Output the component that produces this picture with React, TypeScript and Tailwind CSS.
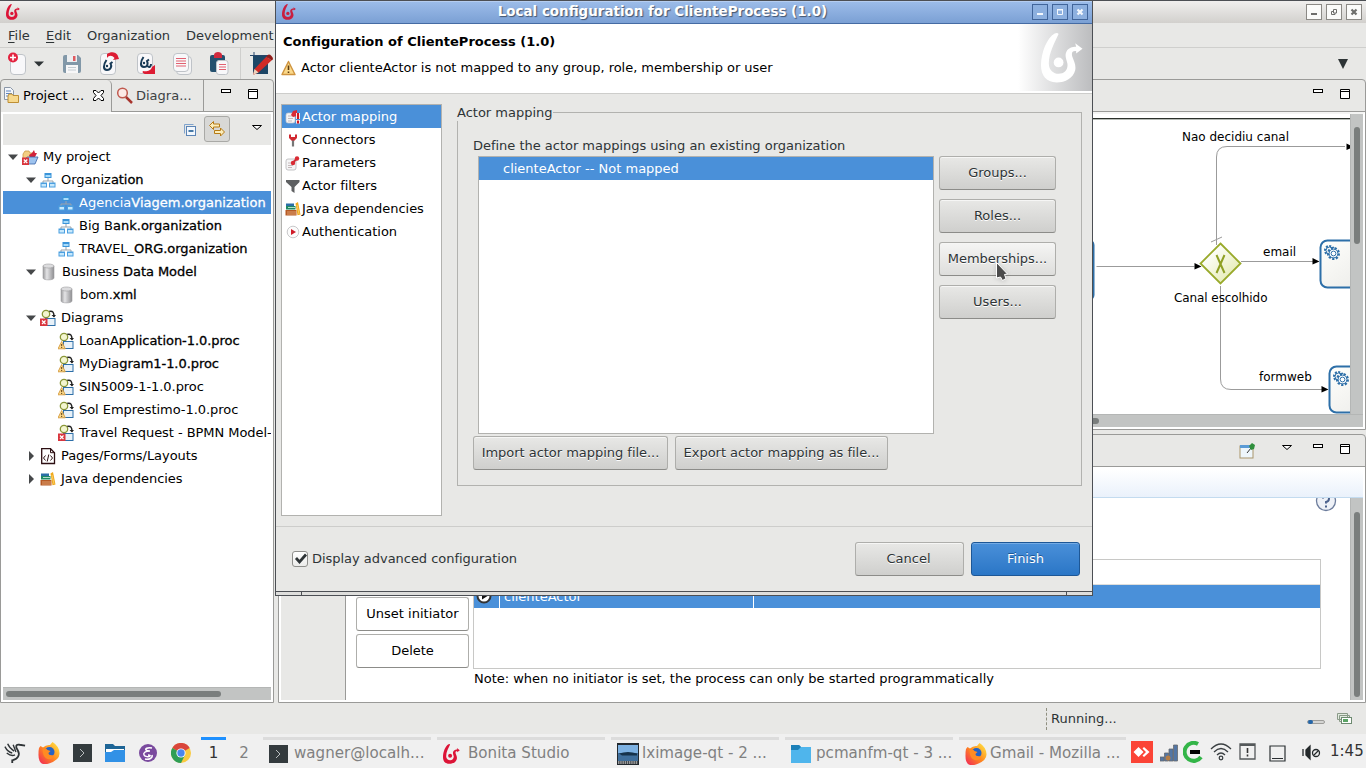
import React from "react";

type P = { className?: string };

function Bonita({ className = "", color = "#dc1437" }: P & { color?: string }) {
  return (
    <svg viewBox="0 0 43 51" className={className} preserveAspectRatio="none">
      <path
        fill={color}
        d="M14 0.5Q17 -.5 18 1C14 10 8 20 8 31C8 38 13 41.500 18 41.500C24 41.500 28 37 27 31C26 27 24 23 26 19C28 15 32 14 36 14L35 10.500L42.500 16L36 21L36 18.500C32 18 31 20 32 24C34 29 36 33 35 38C33 46 25 50.500 16 50.500C5 50.500 0 43 0 33C0 20 6 5 14 .5Z"
      />
      <circle cx="18" cy="30" r="5" fill={color} />
    </svg>
  );
}

function OrgIcon() {
  return (
    <svg viewBox="0 0 16 16" className="h-4 w-4 shrink-0">
      <path d="M8 6v3M3 11V9h10v2" fill="none" stroke="#9aa3ab" />
      <rect x="4.500" y="1" width="7" height="5" fill="#3b94d9" />
      <rect x="5.500" y="3" width="5" height="2" fill="#a8dcfa" />
      <rect x="0.500" y="10.500" width="6.500" height="5" fill="#4b9fe0" />
      <rect x="1.500" y="12" width="4.500" height="2.500" fill="#c6e8fc" />
      <rect x="9" y="10.500" width="6.500" height="5" fill="#4b9fe0" />
      <rect x="10" y="12" width="4.500" height="2.500" fill="#c6e8fc" />
    </svg>
  );
}

function DbIcon() {
  return (
    <svg viewBox="0 0 16 18" className="h-[18px] w-4 shrink-0">
      <defs>
        <linearGradient id="db">
          <stop offset="0" stopColor="#9a9a9c" />
          <stop offset="0.350" stopColor="#e4e4e6" />
          <stop offset="1" stopColor="#8f8f92" />
        </linearGradient>
      </defs>
      <path d="M3 3v12c0 2.500 11 2.500 11 0V3z" fill="url(#db)" stroke="#a0a0a2" strokeWidth="0.600" />
      <ellipse cx="8.500" cy="3" rx="5.500" ry="2" fill="#dcdcde" stroke="#9c9c9e" strokeWidth="0.600" />
    </svg>
  );
}

function ProcIcon({ error }: { error?: boolean }) {
  return (
    <svg viewBox="0 0 16 18" className="h-[18px] w-4 shrink-0">
      <path d="M9 2.500c4-1 5 1 5 5" fill="none" stroke="#222" strokeWidth="1.500" />
      <path d="M11.500 6h4.500l-2 2.500z" fill="#222" />
      <circle cx="6" cy="5" r="3.700" fill="#f3f5cf" stroke="#8a9738" strokeWidth="1.300" />
      <rect x="5.500" y="9.500" width="9.500" height="7" fill="#e8f1f8" stroke="#2d6fa8" />
      {error ? (
        <g>
          <rect x="0" y="9.500" width="7.500" height="7.500" fill="#d9363e" />
          <path d="M2 11.500l3.500 3.500M5.500 11.500L2 15" stroke="#fff" strokeWidth="1.200" />
        </g>
      ) : (
        <g>
          <path d="M3.700 9.500L7.300 16.800H0z" fill="#fbd98a" stroke="#d59a3c" strokeWidth="0.900" strokeLinejoin="round" />
          <path d="M3.700 12v2.200M3.700 15v1" stroke="#5b3a10" />
        </g>
      )}
    </svg>
  );
}

function ProjectIcon() {
  return (
    <svg viewBox="0 0 17 18" className="h-[18px] w-[17px] shrink-0">
      <path d="M1 6l2-3h4l1 2h4v6H1z" fill="#f3cf83" stroke="#c99a46" strokeWidth="0.800" />
      <path d="M7 7l3-2 2-3 1 3h2l-2 4-5 1z" fill="#d1223a" />
      <path d="M2 14l3-5h11l-3 7H6z" fill="#9ec3ee" stroke="#3b64a8" strokeWidth="0.800" />
      <rect x="0" y="9.500" width="7" height="7.500" fill="#d9363e" />
      <path d="M1.800 11.500l3.500 3.500M5.300 11.500L1.800 15" stroke="#fff" strokeWidth="1.200" />
    </svg>
  );
}

function PagesIcon() {
  return (
    <svg viewBox="0 0 16 18" className="h-[18px] w-4 shrink-0">
      <path d="M1.700 1.700h8.800l4 4v10.800H1.700z" fill="#fff" stroke="#2c0e12" strokeWidth="1.300" />
      <path d="M10.500 1.700v4h4" fill="none" stroke="#2c0e12" />
      <path d="M5.500 8.500L3.500 11l2 2.500M10.500 8.500l2 2.500-2 2.500M8.800 7.500l-1.600 7" fill="none" stroke="#2c0e12" />
    </svg>
  );
}

function BooksIcon() {
  return (
    <svg viewBox="0 0 16 16" className="h-4 w-4 shrink-0">
      <rect x="1" y="2.500" width="8" height="2.500" fill="#2a6ea6" />
      <rect x="1" y="5" width="9.500" height="3.500" fill="#1f8a63" />
      <path d="M3 6.500h7" stroke="#d7f0e4" strokeWidth="0.800" />
      <rect x="0.500" y="9" width="11" height="5.500" fill="#b65a25" />
      <path d="M2 11h9.500M2 13h9.500" stroke="#e9b184" strokeWidth="0.800" />
      <path d="M10.500 2.500L13 1l2.500 12.500-3 .8z" fill="#f0a91c" />
      <path d="M12 4l2 9" stroke="#fbd674" strokeWidth="0.800" />
    </svg>
  );
}

function Arrow({ kind }: { kind: "down" | "right" | "none" }) {
  return (
    <svg viewBox="0 0 12 12" className="h-3 w-3 shrink-0">
      {kind === "down" && <path d="M1 3.500h10L6 9z" fill="#46484a" />}
      {kind === "right" && <path d="M4 1v10L9 6z" fill="#46484a" />}
    </svg>
  );
}

function Heavy({ children }: { children: React.ReactNode }) {
  return <span className="[-webkit-text-stroke:0.3px_currentColor]">{children}</span>;
}

const MinIcon = () => (
  <svg viewBox="0 0 12 12" className="h-3 w-3 shrink-0"><rect x="1.500" y="0.500" width="9" height="3" fill="#fff" stroke="#000" /></svg>
);
const MaxIcon = () => (
  <svg viewBox="0 0 12 12" className="h-3 w-3 shrink-0"><path d="M1.500 .5h9v9h-9zM1.500 2.500h9" fill="#fff" stroke="#000" /></svg>
);
const MenuTri = () => (
  <svg viewBox="0 0 12 12" className="h-3 w-3 shrink-0"><path d="M1.500 1.500h9L6 5.500z" fill="#fff" stroke="#000" /></svg>
);

function TreeRow(p: {
  level: number;
  arrow?: "down" | "right";
  icon: React.ReactNode;
  selected?: boolean;
  wide?: boolean;
  children: React.ReactNode;
}) {
  const pad = p.level === 0 ? "pl-[4px]" : p.level === 1 ? "pl-[22px]" : "pl-[40px]";
  return (
    <div className={`flex h-[23px] shrink-0 items-center whitespace-nowrap tracking-[-0.05px] ${pad} ${p.selected ? "bg-[#4a90d9] text-white" : "text-black"}`}>
      <Arrow kind={p.arrow ?? "none"} />
      <span className="ml-[3px] flex w-[18px] shrink-0 items-center">{p.icon}</span>
      <span className={p.wide ? "pl-[4px]" : "pl-[3px]"}>{p.children}</span>
    </div>
  );
}

function WinBtn({ kind, blue }: { kind: "min" | "max" | "restore" | "close"; blue?: boolean }) {
  const c = blue ? "#f4f8fd" : "#6e6e6c";
  return (
    <span className={`flex h-4 w-4 items-center justify-center border ${blue ? "border-[#41659a] bg-[#8db0df]" : "border-[#8b8985] bg-[#fbfbfa]"}`}>
      <svg viewBox="0 0 14 14" className="h-[14px] w-[14px]">
        {kind === "min" && <rect x="4" y="8" width="6" height="2" fill={c} />}
        {kind === "max" && <path d="M4.500 5h5v4.500h-5zM4 4.500h6" fill="none" stroke={c} />}
        {kind === "restore" && <path d="M6.500 4.500h3v3.500h-3zM6.500 6.500h-2v3h3.500v-1.500" fill="none" stroke={c} />}
        {kind === "close" && <path d="M4.500 4.500l5 5M9.500 4.500l-5 5" stroke={c} strokeWidth="2.200" />}
      </svg>
    </span>
  );
}

function Btn({ children, className = "", hot, footer }: { children: React.ReactNode; className?: string; hot?: boolean; footer?: boolean }) {
  return (
    <button
      className={`flex h-[34px] items-center justify-center rounded-[3px] border border-[#aeaeab] border-b-[#8c8c89] text-[#2e3436] shadow-[inset_0_1px_0_#f6f6f5] [text-shadow:0_1px_0_#fff] ${footer ? "pr-[2px]" : "pb-[2px]"} ${hot ? "bg-linear-to-b from-[#f5f5f4] to-[#dededc]" : "bg-linear-to-b from-[#e8e8e6] to-[#cfcfcd]"} ${className}`}
    >
      {children}
    </button>
  );
}

function Toolbar() {
  return (
    <div className="flex h-[31px] shrink-0 items-center bg-[#e8e8e6] pl-[5px] text-[#2e3436]">
      <svg viewBox="0 0 24 26" className="h-[26px] w-6 shrink-0">
        <rect x="5.500" y="3.500" width="15" height="20" rx="3.500" fill="#f8f8fa" stroke="#bfc3c8" />
        <circle cx="8" cy="6.500" r="5" fill="#e3223f" />
        <path d="M8 3.500v6M5 6.500h6" stroke="#fff" strokeWidth="1.600" />
      </svg>
      <svg viewBox="0 0 12 12" className="ml-[4px] h-3 w-3"><path d="M1 3.500h10L6 8.500z" fill="#2e3436" /></svg>
      <svg viewBox="0 0 20 20" className="ml-[17px] h-5 w-5 shrink-0">
        <path d="M1 3q0-2 2-2h13l3 3v13q0 2-2 2H3q-2 0-2-2z" fill="#8298a8" />
        <rect x="5" y="1" width="10" height="7" fill="#eceef0" />
        <rect x="11" y="2" width="2.500" height="5" fill="#df5a5f" />
        <rect x="4" y="11" width="12" height="8" fill="#f7f7f8" />
        <path d="M6 13.500h8M6 16h8" stroke="#c4ccd2" />
      </svg>
      <span className="ml-[15px]">
        <svg viewBox="0 0 24 26" className="h-[26px] w-6">
          <rect x="3.500" y="2.500" width="15" height="21" rx="3.500" fill="#f8f8fa" stroke="#bfc3c8" />
          <path d="M10 3c4-3 9-2 10.500 1l1.500 4-6 1 1.500-2C15 4 12 4 10 7z" fill="#dd1c33" />
          <path d="M9.500 9C6 14 6 19 10 19s5-4 3.500-6.500l2-1.500" fill="none" stroke="#173a56" strokeWidth="2" />
          <circle cx="10" cy="15" r="1.200" fill="#173a56" />
        </svg>
      </span>
      <span className="ml-[13px]">
        <svg viewBox="0 0 24 26" className="h-[26px] w-6">
          <rect x="3.500" y="2.500" width="15" height="20" rx="3.500" fill="#f8f8fa" stroke="#bfc3c8" />
          <path d="M9.500 6C6 11 6 16 10 16s4-4 3-6l2-1.500M14 15c1 2 3 1 3-2" fill="none" stroke="#173a56" strokeWidth="2" />
          <circle cx="10" cy="12" r="1.200" fill="#173a56" />
          <path d="M21 14v9h-9c-3 0-4-2-3-3 3 1 8 0 9-4z" fill="#dd1c33" />
        </svg>
      </span>
      <span className="ml-[13px]">
        <svg viewBox="0 0 24 26" className="h-[26px] w-6">
          <rect x="5.500" y="5.500" width="15" height="18" rx="3.500" fill="#f4f4f5" stroke="#bfc3c8" />
          <rect x="2.500" y="2.500" width="15" height="18" rx="3.500" fill="#f8f8fa" stroke="#bfc3c8" />
          <path d="M5 7.500h10M5 10h10M5 12.500h10M5 15h10" stroke="#e26070" />
        </svg>
      </span>
      <span className="ml-[13px]">
        <svg viewBox="0 0 24 26" className="h-[26px] w-6">
          <rect x="2" y="4" width="15" height="17" rx="2" fill="#24506e" />
          <path d="M6 4c0-4 8-4 8 0v3H6z" fill="#d02a3d" />
          <rect x="8.500" y="9.500" width="11.500" height="14" rx="2.500" fill="#f8f8fa" stroke="#bfc3c8" />
          <path d="M11 13.500h7M11 16h7M11 18.500h7" stroke="#e26070" />
        </svg>
      </span>
      <span className="ml-[8px] h-[31px] w-px bg-[#cfcfcd]" />
      <svg viewBox="0 0 24 26" className="ml-[8px] h-[26px] w-6 shrink-0">
        <path d="M5 1v4M1 4.500h20" stroke="#26466a" />
        <path d="M4 5h15v18H4z" fill="#1d4666" />
        <path d="M17.500 5.500l5 4L9.500 21.500 4 24l1.500-6z" fill="#cf2a26" />
        <path d="M5.500 18l4 3.500L4 24z" fill="#ecd3bd" />
        <path d="M17.500 5.500q2-3.500 5-.5t0 4.500z" fill="#8f1c1a" />
      </svg>
    </div>
  );
}

function LeftPane() {
  return (
    <div className="flex w-[274px] shrink-0 flex-col rounded-t-[4px] border border-[#9a9a98] bg-[#e8e8e6]">
      <div className="flex h-[32px] shrink-0">
        <div className="flex w-[111px] items-center rounded-tr-[5px] border-r border-[#9a9a98] pb-px pl-[2px] text-black">
          <svg viewBox="0 0 17 17" className="mr-[3px] h-[17px] w-[17px] shrink-0">
            <path d="M1.500 .5h6l3 3v9h-9z" fill="#f3f6fb" stroke="#8b97a8" />
            <path d="M3 4h5M3 6.500h6M3 9h3" stroke="#5e84bf" />
            <path d="M5 9l1-2h3l1 1.500h5.500v7H5z" fill="#f7d98e" stroke="#be8f35" />
          </svg>
          <span className="w-[70px] whitespace-nowrap">Project ...</span>
          <svg viewBox="0 0 11 11" className="h-[11px] w-[11px] shrink-0">
            <path d="M.5 .5h2.500l2.500 2.500L8 .5h2.500v2L8 5.500l2.500 3v2H8L5.500 8 3 10.500H.5v-2L3 5.500.5 2.500z" fill="#fff" stroke="#000" />
          </svg>
        </div>
        <div className="flex grow border-b border-[#9a9a98]">
          <div className="flex w-[92px] items-center border-r border-[#9a9a98] pl-[4px] text-[#3c4244]">
            <svg viewBox="0 0 17 17" className="mr-[3px] h-[17px] w-[17px] shrink-0">
              <circle cx="6.500" cy="6" r="4.800" fill="#fbe9e6" stroke="#c0594e" strokeWidth="1.500" />
              <path d="M10 10l6 6" stroke="#a8352e" strokeWidth="2.500" />
            </svg>
            Diagra...
          </div>
          <div className="flex gap-[15px] pl-[16px] pt-[9px]"><MinIcon /><MaxIcon /></div>
        </div>
      </div>
      <div className="flex min-h-0 grow flex-col border-2 border-white bg-white">
        <div className="flex h-[31px] shrink-0 items-center bg-[#e8e8e6]">
          <svg viewBox="0 0 14 14" className="ml-[180px] h-[14px] w-[14px]">
            <path d="M1.500 10.500v-9h9" fill="none" stroke="#7fa3cd" />
            <rect x="3.500" y="3.500" width="9" height="9" fill="#f2f7fd" stroke="#5b84b5" />
            <path d="M5.500 8h5" stroke="#0c4f8a" strokeWidth="1.500" />
          </svg>
          <span className="mb-[2px] ml-[7px] flex h-[26px] w-[26px] items-center justify-center rounded-[3px] border border-[#a9a9a6] bg-[#d8d8d6]">
            <svg viewBox="0 0 18 18" className="h-[18px] w-[18px]">
              <path d="M1.500 5.500l4-4v2.500h6v3h-6v2.500zM16.500 12l-4-4v2.500h-6v3h6V16z" fill="#fbedbb" stroke="#b67a14" strokeLinejoin="round" />
            </svg>
          </span>
          <span className="ml-[21px]"><MenuTri /></span>
        </div>
        <div className="flex min-h-0 grow flex-col overflow-hidden bg-white">
          <TreeRow level={0} arrow="down" icon={<ProjectIcon />}>My project</TreeRow>
          <TreeRow level={1} arrow="down" icon={<OrgIcon />}>Organiz<Heavy>ation</Heavy></TreeRow>
          <TreeRow level={2} selected icon={<OrgIcon />}><span className="tracking-[0.02px]">Agencia<Heavy>Viagem.organization</Heavy></span></TreeRow>
          <TreeRow level={2} icon={<OrgIcon />}><span className="tracking-[0.02px]">Big B<Heavy>ank.organization</Heavy></span></TreeRow>
          <TreeRow level={2} icon={<OrgIcon />}>TRAVEL_<Heavy>ORG.organization</Heavy></TreeRow>
          <TreeRow level={1} wide arrow="down" icon={<DbIcon />}>Business <Heavy>Data Model</Heavy></TreeRow>
          <TreeRow level={2} wide icon={<DbIcon />}>bom.<Heavy>xml</Heavy></TreeRow>
          <TreeRow level={1} arrow="down" icon={<ProcIcon error />}>Diagrams</TreeRow>
          <TreeRow level={2} icon={<ProcIcon />}>LoanA<Heavy>pplication-1.0.proc</Heavy></TreeRow>
          <TreeRow level={2} icon={<ProcIcon />}>MyDia<Heavy>gram1-1.0.proc</Heavy></TreeRow>
          <TreeRow level={2} icon={<ProcIcon />}>SIN5009-1-1.0.proc</TreeRow>
          <TreeRow level={2} icon={<ProcIcon />}>Sol Emprestimo-1.0.proc</TreeRow>
          <TreeRow level={2} icon={<ProcIcon error />}>Travel Request - BPMN Model-</TreeRow>
          <TreeRow level={1} arrow="right" icon={<PagesIcon />}>Pages/Forms/Layouts</TreeRow>
          <TreeRow level={1} arrow="right" icon={<BooksIcon />}>Java dependencies</TreeRow>
        </div>
        <div className="flex h-[13px] shrink-0 items-center border-t border-[#b4b6b5] bg-[#c2c4c3] pl-[3px]">
          <div className="h-[6px] w-[215px] rounded-full bg-[#7a7e7d]" />
        </div>
      </div>
    </div>
  );
}

function Gear({ x, y }: { x: number; y: number }) {
  return (
    <g fill="none" stroke="#2d6fa8">
      <circle cx={x - 4} cy={y - 3} r="4.500" strokeWidth="2" strokeDasharray="2 1.400" />
      <circle cx={x - 4} cy={y - 3} r="3.500" />
      <circle cx={x} cy={y} r="5.400" strokeWidth="2.200" strokeDasharray="2.200 1.500" fill="#fff" />
      <circle cx={x} cy={y} r="4.400" />
      <circle cx={x} cy={y} r="2.400" />
    </g>
  );
}

function Diagram() {
  return (
    <div className="relative grow overflow-hidden bg-white">
      <svg viewBox="1069 114 281 300" className="absolute right-0 top-0 h-[300px] w-[281px]">
        <defs>
          <linearGradient id="gw" x1="0" y1="0" x2="1" y2="1"><stop offset="0.200" stopColor="#fff" /><stop offset="1" stopColor="#dfe6a0" /></linearGradient>
          <linearGradient id="task" x1="0" y1="0" x2="1" y2="1"><stop offset="0" stopColor="#fffffc" /><stop offset="1" stopColor="#e9e9e6" /></linearGradient>
        </defs>
        <path d="M1069 118.500h281" stroke="#2b302b" />
        <path d="M1069 119.500h281" stroke="#b5bab5" />
        <rect x="1060" y="240" width="33.500" height="60" rx="5" fill="#fff" stroke="#2d6fa8" strokeWidth="2" />
        <g fill="none" stroke="#9b9b9b">
          <path d="M1096.500 266.500h98M1216.500 245v-88q0-10.500 10.500-10.500h118M1241 261.500h72M1220.500 286v93q0 10.500 10.500 10.500h92M1211 242l11-5" />
        </g>
        <g fill="#000"><path d="M1194.500 263v6.500l7-3zM1346.500 143.500v6.500l7-3zM1312.500 258v6.500l7-3zM1321.500 386v6.500l7-3z" /></g>
        <path d="M1220.500 243.500l20 20-20 20-20-20z" fill="url(#gw)" stroke="#99aa2b" strokeWidth="1.800" />
        <path d="M1216.500 255l8 18M1224.500 255l-8 18" stroke="#8fa024" strokeWidth="2" />
        <rect x="1320.500" y="240.500" width="60" height="47" rx="7" fill="url(#task)" stroke="#2d6fa8" strokeWidth="2" />
        <rect x="1329.500" y="366.500" width="60" height="46" rx="7" fill="url(#task)" stroke="#2d6fa8" strokeWidth="2" />
        <Gear x={1333.5} y={253.5} />
        <Gear x={1342.5} y={379.5} />
        <g fill="#000" className="font-['DejaVu_Sans'] text-[12px]">
          <text x="1182" y="141">Nao decidiu canal</text>
          <text x="1263" y="256">email</text>
          <text x="1174" y="302" textLength="93.500">Canal escolhido</text>
          <text x="1259" y="381">formweb</text>
        </g>
      </svg>
    </div>
  );
}

function EditorPane() {
  return (
    <div className="flex h-[351px] shrink-0 flex-col rounded-tr-[4px] border border-[#9a9a98] bg-[#e8e8e6]">
      <div className="flex h-[32px] shrink-0 justify-end gap-[15px] border-b border-[#9a9a98] pr-[14px] pt-[9px]"><MinIcon /><MaxIcon /></div>
      <div className="flex min-h-0 grow flex-col border-2 border-white border-t-[#f4f4f3]">
        <div className="flex min-h-0 grow">
          <Diagram />
          <div className="w-[13px] shrink-0 border-l border-[#b4b6b5] bg-[#c2c4c3] pl-[3px] pt-[13px]"><div className="h-[117px] w-[6px] rounded-full bg-[#7a7e7d]" /></div>
        </div>
        <div className="flex h-[13px] shrink-0 items-center border-t border-[#b4b6b5] bg-[#c2c4c3] pl-[20px]"><div className="h-[6px] w-[798px] rounded-full bg-[#7a7e7d]" /></div>
      </div>
    </div>
  );
}

function PropertiesPane() {
  return (
    <div className="mt-[4px] flex min-h-0 grow flex-col rounded-t-[4px] border border-[#9a9a98] bg-[#e8e8e6]">
      <div className="flex h-[32px] shrink-0 justify-end border-b border-[#9a9a98] pr-[14px] pt-[9px]">
        <svg viewBox="0 0 17 17" className="-mt-[2px] mr-[25px] h-[17px] w-[17px]">
          <rect x="1" y="4" width="13" height="12" fill="#eef6fb" stroke="#a9956b" />
          <rect x="1" y="3" width="13" height="3" fill="#5b9bd6" />
          <path d="M8 11l4-5" stroke="#333" />
          <path d="M10 4l3-3 3 2-1 4-3 1z" fill="#2f8f3c" />
        </svg>
        <span className="mr-[19px]"><MenuTri /></span>
        <span className="mr-[15px]"><MinIcon /></span>
        <MaxIcon />
      </div>
      <div className="flex min-h-0 grow flex-col border-2 border-white bg-white">
        <div className="h-[29px] shrink-0 border-b border-[#c3dbef] bg-linear-to-b from-white to-[#eaf1fb]" />
        <div className="flex min-h-0 grow">
          <div className="w-[65px] shrink-0 border-r border-[#9a9a98] bg-[#e8e8e6]" />
          <div className="flex w-[127px] shrink-0 flex-col gap-[3px] pl-[10px] pr-[4px] pt-[99px] text-black">
            <div className="flex h-[34px] items-center justify-center rounded-[3px] border border-[#aeaeab] border-b-[#8c8c89] pb-[2px]">Unset initiator</div>
            <div className="flex h-[34px] items-center justify-center rounded-[3px] border border-[#aeaeab] border-b-[#8c8c89] pb-[2px]">Delete</div>
          </div>
          <div className="flex w-[848px] shrink-0 flex-col pt-[61px]">
            <div className="h-[110px] shrink-0 border border-[#c8c8c6]">
              <div className="h-[25px] border-b border-[#dededc]" />
              <div className="flex h-[23px] items-center bg-[#4a90d9] text-white">
                <span className="flex w-[26px] justify-center self-stretch border-r border-white pr-[5px]">
                  <svg viewBox="0 0 16 16" className="mt-[3px] h-4 w-4"><circle cx="8" cy="8" r="6.500" fill="#fff" stroke="#333" strokeWidth="2" /><path d="M6 4.500v7L11.500 8z" fill="#111" /></svg>
                </span>
                <span className="flex w-[254px] items-center self-stretch border-r border-white pl-[4px]">clienteActor</span>
              </div>
            </div>
            <div className="pl-px pt-[2px] leading-[16px] tracking-[-0.01px] text-black">Note: when no initiator is set, the process can only be started programmatically</div>
          </div>
          <div className="min-w-0 grow [clip-path:inset(0_0_0_-10px)]">
            <svg viewBox="0 0 22 22" className="-ml-[6px] -mt-[8px] h-[22px] w-[22px]">
              <circle cx="11" cy="11" r="9.500" fill="#eef1f7" stroke="#6c7c9c" strokeWidth="1.300" />
              <path d="M8 8.500q0-3 3-3t3 3-3 3.500v1.500M11 15.500v2" fill="none" stroke="#4b618c" strokeWidth="2" />
            </svg>
          </div>
          <div className="w-[13px] shrink-0 border-l border-[#b4b6b5] bg-[#c2c4c3] pl-[3px] pt-[14px]"><div className="h-[185px] w-[6px] rounded-full bg-[#7a7e7d]" /></div>
        </div>
      </div>
    </div>
  );
}

function NavItem({ icon, selected, children }: { icon: React.ReactNode; selected?: boolean; children: React.ReactNode }) {
  return (
    <div className={`flex h-[23px] items-center gap-[1px] pl-[3px] ${selected ? "bg-[#4a90d9] text-white" : "text-black"}`}>
      <svg viewBox="0 0 16 16" className="h-4 w-4 shrink-0">{icon}</svg>
      <span className="tracking-[-0.03px]">{children}</span>
    </div>
  );
}

function Dialog() {
  return (
    <div className="absolute left-[275px] top-0 flex h-[596px] w-[818px] flex-col border border-[#4c4f54] bg-[#e8e8e6] text-[#2e3436]">
      <div className="flex h-[23px] shrink-0 items-center border-b border-[#456ba3] bg-linear-to-b from-[#9dbdea] to-[#7ba0d4] pl-[6px] pr-[4px] shadow-[inset_0_1px_0_#b5cdf0]">
        <Bonita className="h-4 w-[14px]" color="#c91e3f" />
        <span className="grow pb-[2px] pr-[3px] text-center text-[13.450px] font-bold text-white [text-shadow:1px_1px_1px_#42546e]">Local configuration for ClienteProcess (1.0)</span>
        <span className="flex gap-1"><WinBtn kind="min" blue /><WinBtn kind="max" blue /><WinBtn kind="close" blue /></span>
      </div>
      <div className="flex h-[70px] shrink-0 justify-between border-b border-[#cdcdcb] bg-white pb-[2px] text-black">
        <div className="flex flex-col pl-[7px] pt-[9px]">
          <div className="font-bold leading-[17px] tracking-[0.01px]">Configuration of ClienteProcess (1.0)</div>
          <div className="mt-[9px] flex items-center leading-[18px] tracking-[-0.03px]">
            <svg viewBox="0 0 15 16" className="-ml-[2px] mr-[5px] h-4 w-[15px]">
              <path d="M7.500 1.500L14 14.500H1z" fill="#fbd98a" stroke="#cf9440" strokeWidth="1.400" strokeLinejoin="round" />
              <path d="M7.500 5.500v4.500M7.500 11.500v1.500" stroke="#5b3a10" strokeWidth="1.600" />
            </svg>
            Actor clienteActor is not mapped to any group, role, membership or user
          </div>
        </div>
        <div className="flex w-[74px] justify-end bg-linear-to-r from-white to-[#bcbdbf] pr-[9px] pt-[9px]"><Bonita className="h-[50px] w-[42px]" color="#fff" /></div>
      </div>
      <div className="flex h-[433px] shrink-0 border-b border-[#cdcdcb]">
        <div className="ml-[5px] mt-[10px] h-[412px] w-[161px] shrink-0 border border-[#b2b2af] bg-white">
          <NavItem selected icon={<g><rect x="1" y="4" width="9" height="10" rx="2" fill="#f5f5f6" stroke="#c5c5c8" strokeWidth="0.700" /><path d="M3 7h5M3 9.500h5M3 12h4" stroke="#c5b9bb" /><path d="M6 6l2-4 4-1v6l-4 1z" fill="#d92b34" /><path d="M13 4v6M13 11v3.500" stroke="#fff" strokeWidth="4" /><path d="M13 4v6M13 11.500v3" stroke="#cf1820" strokeWidth="2.200" /></g>}>Actor mapping</NavItem>
          <NavItem icon={<g><path d="M4 2.500v3.500l3 3h2l3-3V2.500H10V5H6V2.500z" fill="#d12830" /><path d="M8 8.500v6" stroke="#777" strokeWidth="2.200" /></g>}>Connectors</NavItem>
          <NavItem icon={<g><rect x="1" y="4" width="10" height="11" rx="2" fill="#f5f5f6" stroke="#b5b5b8" strokeWidth="0.800" /><path d="M3 8h5M3 10.500h5M3 12.500h4" stroke="#c5b9bb" /><path d="M8 7.500l4-4" stroke="#c8303a" strokeWidth="2" /><circle cx="8" cy="8" r="2.200" fill="#d92b34" /><circle cx="12" cy="3.500" r="2.200" fill="#d92b34" /></g>}>Parameters</NavItem>
          <NavItem icon={<path d="M1 2h13.500v2L9.500 9v6l-3-2V9L1 4z" fill="#5e6062" />}>Actor filters</NavItem>
          <NavItem icon={<BooksIcon />}>Java dependencies</NavItem>
          <NavItem icon={<g><circle cx="8" cy="8" r="5.800" fill="#fbfbfb" stroke="#c9c9cb" /><path d="M6 5v6l5-3z" fill="#d01c28" /></g>}>Authentication</NavItem>
        </div>
        <fieldset className="ml-[15px] mt-[10px] h-[382px] w-[625px] shrink-0 border border-[#b2b2af]">
          <legend className="-ml-px h-[17px] leading-[17px]">Actor mapping</legend>
          <div className="flex">
            <div className="w-[477px] pl-[15px] pt-[16px]">
              <div className="h-[19px] leading-[17px] tracking-[-0.02px]">Define the actor mappings using an existing organization</div>
              <div className="ml-[5px] h-[278px] w-[456px] border border-[#b2b2af] bg-white">
                <div className="flex h-[23px] items-center bg-[#4a90d9] pl-[24px] text-white">clienteActor -- Not mapped</div>
              </div>
              <div className="mt-[2px] flex gap-[7px]"><Btn className="w-[195px] shrink-0 tracking-[-0.03px]">Import actor mapping file...</Btn><Btn className="w-[213px] shrink-0 tracking-[-0.03px]">Export actor mapping as file...</Btn></div>
            </div>
            <div className="flex w-[121px] flex-col gap-[9px] pl-[4px] pt-[35px]">
              <Btn>Groups...</Btn><Btn>Roles...</Btn><Btn hot>Memberships...</Btn><Btn>Users...</Btn>
            </div>
          </div>
        </fieldset>
      </div>
      <div className="flex min-h-0 grow items-center pb-px pl-[16px] pr-[12px]">
        <span className="mr-[4px] flex h-4 w-4 items-center justify-center rounded-[3px] border border-[#8f8f8c] bg-linear-to-b from-white to-[#ececea]">
          <svg viewBox="0 0 14 14" className="h-[14px] w-[14px] overflow-visible"><path d="M3 6l3.500 4L13 2.500" fill="none" stroke="#2e3436" strokeWidth="2.700" /></svg>
        </span>
        <span className="grow tracking-[-0.03px]">Display advanced configuration</span>
        <Btn footer className="w-[109px]">Cancel</Btn>
        <button className="ml-[7px] flex h-[34px] w-[109px] items-center justify-center rounded-[3px] border border-[#1d5796] bg-linear-to-b from-[#4a90d9] to-[#2a76c6] pb-px text-white shadow-[inset_0_1px_0_#74abe4] [text-shadow:0_-1px_0_#1d5796]">Finish</button>
      </div>
      <div className="flex h-[4px] shrink-0 border-t border-[#4c4f54] bg-[#dededc]">
        <span className="w-[26px] border-r border-[#4c4f54]" />
        <span className="w-[765px] border-r border-[#4c4f54]" />
      </div>
    </div>
  );
}

function Firefox() {
  return (
    <svg viewBox="0 0 22 22" className="h-[22px] w-[22px] shrink-0">
      <defs><linearGradient id="ff" x1="1" y1="0" x2="0" y2="1"><stop offset="0" stopColor="#fff04a" /><stop offset="0.500" stopColor="#ff8a1e" /><stop offset="1" stopColor="#f0215c" /></linearGradient></defs>
      <path d="M1 6l1.500-2L5 5.500Q8 2.500 12 3L14.500 0Q21 4 21.500 11T11 21.500 .5 12Q.5 8 1 6z" fill="url(#ff)" />
      <circle cx="11.500" cy="10" r="5" fill="#2463c4" />
      <path d="M4.500 7q4-1.500 5 1l3 1-2 2q0 3 6 2-2 5-7 4-5-2-5-10z" fill="#ff8b22" />
    </svg>
  );
}
function Term() {
  return <svg viewBox="0 0 19 18" className="h-[18px] w-[19px] shrink-0"><rect width="19" height="18" fill="#343b3e" /><path d="M7 5l4 4-4 4" fill="none" stroke="#b9bebf" /></svg>;
}
function Folder({ light }: { light?: boolean }) {
  return light ? (
    <svg viewBox="0 0 20 18" className="h-[18px] w-5 shrink-0"><path d="M0 0h8l2 2h10v16H0z" fill="#4fb5ec" /><path d="M0 0h8l2 2-3 3H0z" fill="#1c80b8" /></svg>
  ) : (
    <svg viewBox="0 0 20 18" className="h-[18px] w-5 shrink-0"><path d="M0 0h8l2 2h10v6H0z" fill="#1e6596" /><path d="M1 5h18v4H1z" fill="#fff" /><path d="M0 8h6l3-2h11v12H0z" fill="#3191e6" /></svg>
  );
}

function Task({ icon, children, last }: { icon: React.ReactNode; children: string; last?: boolean }) {
  return (
    <div className={`mr-[6px] flex shrink-0 flex-col ${last ? "w-[167px]" : "w-[168px]"}`}>
      <div className="h-[3px] bg-[#dcdcdc]" />
      <div className="flex grow items-center whitespace-nowrap pb-px pl-[6px] text-[15.100px] text-[#808080]">
        <span className="flex w-[25px] shrink-0 items-center">{icon}</span>{children}
      </div>
    </div>
  );
}

function Taskbar() {
  return (
    <div className="flex h-[34px] shrink-0 bg-[#f0f0f0] pt-[3px]">
      <div className="flex w-[201px] shrink-0 items-center pl-[4px]">
        <svg viewBox="0 0 24 24" className="h-[22px] w-[22px]" fill="none" stroke="#2f3437" strokeWidth="2">
          <path d="M23 4l-6-1c-4-1-5 2-2 6 3 5 0 10-6 11v3" /><path d="M1 5q3 6 8 7M4 2q2 5 7 8M3 12q5 4 9 2M10 3l3 8" strokeWidth="1.500" />
        </svg>
        <span className="ml-[12px] flex w-[35px]"><Firefox /></span>
        <span className="flex w-[32px]"><Term /></span>
        <span className="flex w-[34px]"><Folder /></span>
        <svg viewBox="0 0 18 18" className="h-[18px] w-[18px]"><circle cx="9" cy="9" r="9" fill="#7a4a9e" /><path d="M13 4c-5-1-7 1-6 2s3 1 4 1c-5 0-7 2-6 4s5 2 6 1-2-1-2-1M6 15c4 1 8-1 7-4" fill="none" stroke="#fff" strokeWidth="1.500" /></svg>
        <svg viewBox="0 0 20 20" className="ml-[14px] h-5 w-5">
          <circle cx="10" cy="10" r="10" fill="#f9ca3f" /><path d="M10 10L1.300 5A10 10 0 0 1 18.700 5z" fill="#d9453b" /><path d="M10 10L1.300 5A10 10 0 0 0 10 20l4-8z" fill="#2f9e55" /><circle cx="10" cy="10" r="4.600" fill="#fff" /><circle cx="10" cy="10" r="3.700" fill="#4a86ec" />
        </svg>
      </div>
      <div className="flex w-[25px] shrink-0 flex-col items-center border-t-[3px] border-[#1e90ff] pt-[1px] text-[15px] leading-[24px] text-[#333]">1</div>
      <div className="mr-[6px] flex w-[31px] shrink-0 flex-col items-center pl-[5px] pt-[4px] text-[15px] leading-[24px] text-[#808080]">2</div>
      <Task icon={<Term />}>wagner@localh...</Task>
      <Task icon={<Bonita className="h-5 w-[17px]" />}>Bonita Studio</Task>
      <Task icon={<svg viewBox="0 0 22 22" className="h-[22px] w-[22px]"><rect width="22" height="22" fill="#22282e" /><rect x="1" y="2" width="20" height="8" fill="#7db1e2" /><rect x="1" y="10" width="20" height="8" fill="#3f6e9b" /><path d="M2 10.500q9-3 18 0v2H5z" fill="#16324a" /><path d="M1 19.500h20" stroke="#9a9a9a" strokeWidth="3" strokeDasharray="1.500 .7" /></svg>}>lximage-qt - 2 ...</Task>
      <Task icon={<Folder light />}>pcmanfm-qt - 3 ...</Task>
      <Task last icon={<Firefox />}>Gmail - Mozilla ...</Task>
      <div className="-ml-[1px] flex grow items-center pb-[2px]">
        <svg viewBox="0 0 22 22" className="h-[22px] w-[22px]"><rect width="22" height="22" fill="#fb4436" /><path d="M7.500 6l5 5-5 5-5-5zM13 6l5.500 5-5.500 5-1.500-1.500 3.500-3.500-3.500-3.500z" fill="#fff" /></svg>
        <svg viewBox="0 0 18 18" className="ml-[7px] mt-[3px] h-[18px] w-[18px]"><path d="M0 13h4v4H0zM4.500 9h4v8h-4zM9 5h4v12H9zM13.500 1h4v16h-4z" fill="#5376a5" stroke="#68696c" strokeWidth="0.800" /><circle cx="8" cy="14" r="2.500" fill="#b67d45" /></svg>
        <svg viewBox="0 0 22 22" className="ml-[5px] h-[22px] w-[22px]"><path d="M15 3A9 9 0 1 0 18 16" fill="none" stroke="#33b548" strokeWidth="4" /><rect x="7" y="9" width="10" height="4" fill="#000" /></svg>
        <svg viewBox="0 0 22 18" className="ml-[5px] h-[18px] w-[22px]" fill="none" stroke="#3b4043" strokeWidth="1.300"><path d="M1 6q10-10 20 0M4 9q7-7 14 0M7 12q4-4 8 0" /><circle cx="11" cy="15" r="1.800" /></svg>
        <svg viewBox="0 0 17 17" className="ml-[7px] h-[17px] w-[17px]"><path d="M1 1h15v15H1z" fill="none" stroke="#54585a" strokeWidth="1.300" /><path d="M1 2h15" stroke="#54585a" strokeWidth="2" /><path d="M8.500 5v5M8.500 11.500v2" stroke="#333" strokeWidth="1.600" /></svg>
        <svg viewBox="0 0 17 17" className="ml-[13px] mt-[3px] h-[17px] w-[17px]"><path d="M1 1h15v15H1zM3 13.500h11" fill="none" stroke="#2b3033" strokeWidth="1.200" /></svg>
        <svg viewBox="0 0 19 17" className="ml-[16px] mt-[2px] h-[17px] w-[19px]"><path d="M1 5v7M4 6l4-4v13l-4-4z" fill="#24292b" stroke="#24292b" strokeWidth="1.300" /><circle cx="14" cy="9" r="3.500" fill="none" stroke="#24292b" strokeWidth="1.300" /><path d="M11.500 11.500l5-5" stroke="#24292b" strokeWidth="1.300" /></svg>
        <span className="ml-[9px] whitespace-nowrap text-[15px] text-[#333]">1:45</span>
      </div>
    </div>
  );
}

export default function App() {
  return (
    <div className="relative flex h-[768px] w-[1366px] flex-col overflow-hidden whitespace-nowrap bg-[#e8e8e6] font-['DejaVu_Sans',sans-serif] text-[13px] leading-[17px]">
      <div className="flex h-[23px] shrink-0 items-center justify-between border-t border-[#4c4f54] bg-linear-to-b from-[#f0efee] to-[#d2d0cd] pl-[6px] pr-[4px]">
        <Bonita className="h-4 w-[14px]" />
        <span className="flex gap-1"><WinBtn kind="min" /><WinBtn kind="restore" /><WinBtn kind="close" /></span>
      </div>
      <div className="flex h-[25px] shrink-0 items-center border-b border-[#cfcfcd] pl-[8px] text-[#2e3436]">
        <span className="w-[38px]"><u className="underline-offset-2">F</u>ile</span>
        <span className="w-[41px]"><u className="underline-offset-2">E</u>dit</span>
        <span className="w-[99px]">Organization</span>
        <span>Development</span>
      </div>
      <div className="flex h-[31px] shrink-0 items-center justify-between">
        <Toolbar />
        <svg viewBox="0 0 12 12" className="mr-[17px] h-3 w-3"><path d="M1 1h10L6 11z" fill="#2e3436" /></svg>
      </div>
      <div className="flex h-[624px] shrink-0">
        <LeftPane />
        <div className="ml-[4px] flex min-w-0 grow flex-col">
          <EditorPane />
          <PropertiesPane />
        </div>
      </div>
      <div className="flex h-[31px] shrink-0 items-center pl-[1046px] text-[#2e3436]">
        <span className="h-[22px] border-l border-dashed border-[#8f8f80]" />
        <span className="ml-[4px] w-[256px]">Running...</span>
        <span className="mt-[7px] flex h-[4px] w-[18px] rounded-full border border-[#9d9d9a] bg-[#d5d5d3]"><span className="-mt-px h-[4px] w-[5px] rounded-full bg-[#2466a8]" /></span>
        <svg viewBox="0 0 16 14" className="ml-[12px] h-[14px] w-4"><path d="M.5 1.500h10v6H.5zM2.500 3.500h10v6h-10z" fill="#e2ebe0" stroke="#8a9a88" /><rect x="4.500" y="5.500" width="10" height="6" fill="#fff" stroke="#6d8a70" /><rect x="6" y="7" width="5" height="3" fill="#5aa465" /></svg>
      </div>
      <Taskbar />
      <Dialog />
      <svg viewBox="0 0 14 22" className="absolute left-[995px] top-[261px] h-[22px] w-[14px] drop-shadow-sm"><path d="M1.500 1.500l11 11.500-3 .5 1.500 4-3.500 2-2-3.500-4 1z" fill="#4b4b4b" stroke="#fff" /></svg>
    </div>
  );
}
